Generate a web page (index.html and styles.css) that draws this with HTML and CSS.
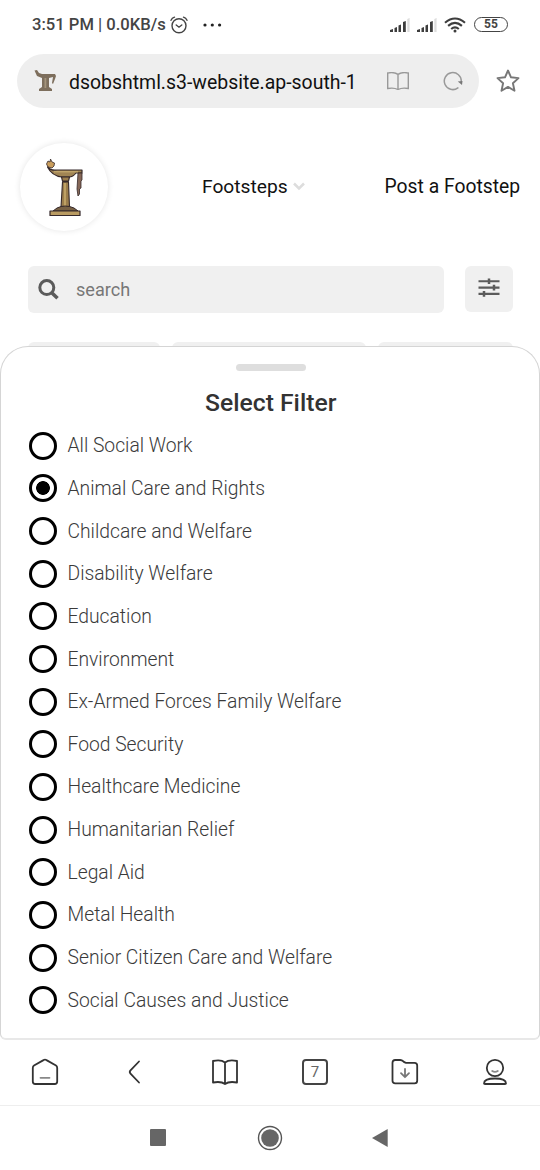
FILE: index.html
```html
<!DOCTYPE html>
<html lang="en">
<head>
<meta charset="utf-8">
<title>Select Filter</title>
<link rel="stylesheet" href="styles.css">
</head>
<body>
<div class="status">
  <span class="clock">3:51 PM | 0.0KB/s</span>
  <svg class="alarm" width="18" height="18" viewBox="0 0 18 18" fill="none" stroke="#444" stroke-width="1.4" stroke-linecap="round"><circle cx="9" cy="9.8" r="7"/><path d="M1 4.3Q2 2 4.5 1.2M17 4.3Q16 2 13.5 1.2M6.2 9l2.8 2.2L11.8 9"/></svg>
  <svg class="dots" width="19" height="4" viewBox="0 0 19 4" fill="#222"><circle cx="2" cy="2" r="1.6"/><circle cx="9.3" cy="2" r="1.6"/><circle cx="16.6" cy="2" r="1.6"/></svg>
  <div class="indicators">
    <svg width="20" height="16" viewBox="0 0 20 16" fill="#3d3d3d"><path d="M0 13l3-1v3H0zM4.5 11l2.5-1v5H4.5zM8.5 8.5l2.5-1V15H8.5zM13 5l2.8-1v11H13z"/><path d="M17.3 2l2.3-1v14h-2.3z" fill="#ddd"/></svg>
    <svg class="signal-two" width="20" height="16" viewBox="0 0 20 16" fill="#3d3d3d"><path d="M0 13l3-1v3H0zM4.5 11l2.5-1v5H4.5zM8.5 8.5l2.5-1V15H8.5zM13 5l2.8-1v11H13z"/><path d="M17.3 2l2.3-1v14h-2.3z" fill="#ddd"/></svg>
    <svg class="wifi" width="22" height="16" viewBox="0 0 22 16" fill="none" stroke="#3d3d3d" stroke-width="2.1"><path d="M1 5.7Q11-2.700 21 5.700M4.100 8.900Q11 3 17.900 8.900M7.200 12Q11 8.700 14.800 12"/><circle cx="11" cy="14" r="1.5" fill="#3d3d3d" stroke="none"/></svg>
    <span class="battery">55</span>
  </div>
</div>
<div class="address-row">
  <div class="address">
    <svg class="favicon" width="23" height="23" viewBox="0 0 23 23" fill="#7d6e5c"><path d="M.5.5L3 0l2 3 3 1h13l1 2-1 3-2 5-1-1 1-6-4 1v9l3 2v2H5v-2l3-2V8L3 6z"/><path d="M10.500 8h1.800v10h-1.800z" fill="#a4947c"/></svg>
    <span class="url">dsobshtml.s3-website.ap-south-1</span>
    <svg class="reader" width="22" height="18" viewBox="0 0 22 18" fill="none" stroke="#999" stroke-width="1.4"><path d="M.7 1Q7-.2 11 2.3 15-.2 21.3 1v15.500Q15 15.300 11 17.500 7 15.300.7 16.500zM11 2.300v15"/></svg>
    <svg class="reload" width="20" height="20" viewBox="0 0 20 20"><path d="M14.900 16.900A8.500 8.500 0 1 1 18.300 10.500" fill="none" stroke="#999" stroke-width="1.5" stroke-linecap="round"/><path d="M14.800 10.500l4.700-.5-.5 4z" fill="#777"/></svg>
  </div>
  <svg class="star" width="24" height="24" viewBox="0 0 24 24" fill="none" stroke="#777" stroke-width="1.9" stroke-linejoin="round"><path d="M12 1.500l3 6.800 7.500.8-5.600 5.100 1.600 7.500-6.500-3.800-6.500 3.800 1.600-7.500L1.500 9.100 9 8.300z"/></svg>
</div>
<div class="site-header">
  <div class="logo">
    <svg width="40" height="60" viewBox="0 0 40 60" stroke="#35282a" stroke-linejoin="round">
      <path d="M3 3l2 1 .5-3L7 4l2.500 1-.5 3-2 2-4-1-1.500-3z" fill="#c99d5c" stroke-width=".8"/>
      <path d="M2.500 9Q6 13 12 12h25v3H31Q28 19 24 19h-7Q7 18 2.500 9z" fill="#a08454" stroke-width="1.2"/>
      <path d="M9 13.800h24" stroke="#cdb274" stroke-width="1"/>
      <path d="M33 15h4v7l-1 1v7l-1.500 1v5l-1.500 2-1-7z" fill="#866858" stroke-width=".8"/>
      <path d="M16.500 19h8l-1 4h-6zM17.500 24h6l1 25H16z" fill="#9b7d4c" stroke-width="1.1"/>
      <path d="M20 25v24" stroke="#c7aa6b" stroke-width="1.6"/>
      <path d="M12 50q8-4 17 0l4 3H8z" fill="#776044" stroke-width="1"/>
      <path d="M5 53h30v4.500H5z" fill="#b99b62" stroke-width="1.2"/>
    </svg>
  </div>
  <span class="nav-main">Footsteps</span>
  <svg class="caret" width="12" height="9" viewBox="0 0 12 9" fill="none" stroke="#ddd" stroke-width="2.5"><path d="M1 1.500l5 5 5-5"/></svg>
  <span class="nav-post">Post a Footstep</span>
</div>
<div class="search-row">
  <div class="search">
    <svg width="21" height="21" viewBox="0 0 21 21" fill="none" stroke="#5b5b5b"><circle cx="8.8" cy="8.6" r="7" stroke-width="3"/><path d="M14 14l5.500 5.300" stroke-width="3.6"/></svg>
    <span>search</span>
  </div>
  <div class="filter">
    <svg width="22" height="19" viewBox="0 0 22 19" fill="none" stroke="#5b5b5b" stroke-width="2.1"><path d="M.5 3.300h21M.5 9.600h21M.5 15.900h21"/><path d="M11 .5v5.600M16 6.800v5.600M6 13.100v5.600" stroke-width="2.500"/></svg>
  </div>
</div>
<div class="chips"><div></div><div></div><div></div></div>
<div class="sheet">
  <div class="handle"></div>
  <h1>Select Filter</h1>
  <ul>
    <li><i></i><span>All Social Work</span></li>
    <li><i class="on"></i><span>Animal Care and Rights</span></li>
    <li><i></i><span>Childcare and Welfare</span></li>
    <li><i></i><span>Disability Welfare</span></li>
    <li><i></i><span>Education</span></li>
    <li><i></i><span>Environment</span></li>
    <li><i></i><span>Ex-Armed Forces Family Welfare</span></li>
    <li><i></i><span>Food Security</span></li>
    <li><i></i><span>Healthcare Medicine</span></li>
    <li><i></i><span>Humanitarian Relief</span></li>
    <li><i></i><span>Legal Aid</span></li>
    <li><i></i><span>Metal Health</span></li>
    <li><i></i><span>Senior Citizen Care and Welfare</span></li>
    <li><i></i><span>Social Causes and Justice</span></li>
  </ul>
</div>
<div class="toolbar">
  <div><svg width="28" height="28" viewBox="0 0 28 28"><path d="M12.500 2.100Q14 1.200 15.500 2.100L25 7.500Q26.200 8.200 26.200 10v13.500Q26.200 26 23.700 26H4.300Q1.800 26 1.800 23.500V10Q1.800 8.200 3 7.500z"/><path d="M9.500 19.800h9" stroke="#888"/></svg></div>
  <div><svg width="28" height="28" viewBox="0 0 28 28"><path d="M18 3.500l-8.500 8.900q-1.500 1.600 0 3.200l8.500 8.900"/></svg></div>
  <div><svg width="28" height="28" viewBox="0 0 28 28"><path d="M2 3Q10 1.200 14 4.500 18 1.200 26 3v21.500Q18 23 14 26 10 23 2 24.500zM14 4.500V26"/></svg></div>
  <div><span class="tabs">7</span></div>
  <div><svg width="28" height="28" viewBox="0 0 28 28"><path d="M4.200 2h5Q11 2 12 3.200T15 4.800h8.500Q26.200 4.800 26.200 7.500v15.200Q26.200 25.400 23.500 25.400H4.200Q1.500 25.400 1.500 22.700v-18Q1.500 2 4.200 2z"/><path d="M14 11v8M10 15.200l4 4 4-4" stroke="#777"/></svg></div>
  <div><svg width="28" height="28" viewBox="0 0 28 28"><circle cx="14" cy="10" r="8.200"/><path d="M3 25.500Q3 20.500 14 20.500t11 5q0 .5-1 .5H4q-1 0-1-.5z"/><path d="M11.200 13q2.800 1.800 5.600 0" stroke="#888"/></svg></div>
</div>
<div class="system">
  <svg class="square" width="16" height="17" viewBox="0 0 16 17"><rect width="16" height="17" rx="1" fill="#666"/></svg>
  <svg class="circle" width="26" height="26" viewBox="0 0 26 26"><circle cx="13" cy="13" r="11.5" fill="none" stroke="#555" stroke-width="1.4"/><circle cx="13" cy="13" r="8.8" fill="#666"/></svg>
  <svg class="triangle" width="16" height="20" viewBox="0 0 16 20"><path d="M15.700 1v18L0 10z" fill="#666"/></svg>
</div>
</body>
</html>
```
FILE: styles.css
```css
* { box-sizing: border-box; }
body { margin: 0; width: 540px; height: 1170px; overflow: hidden; display: flex; flex-direction: column; background: #fff; color: #111; font-family: Roboto, sans-serif; }
body > div { flex: none; }
svg { display: block; flex: none; }
span { white-space: nowrap; }

.status { height: 54px; display: flex; align-items: center; padding: 0 32px 5px; }
.clock { width: 138px; font-size: 16.6px; font-weight: 500; color: #444; }
.dots { margin-left: 15px; }
.indicators { margin-left: auto; display: flex; align-items: center; }
.signal-two { margin-left: 7px; }
.wifi { margin: 0 8px 0 7px; }
.battery { width: 34px; height: 15px; border: 1.5px solid #444; border-radius: 8px; font-size: 12px; line-height: 13px; font-weight: 700; color: #444; text-align: center; }

.address-row { height: 54px; padding-left: 17px; display: flex; align-items: center; }
.address { width: 462px; height: 54px; border-radius: 27px; background: #eee; display: flex; align-items: center; padding-left: 17px; }
.url { width: 317px; margin-left: 12px; padding-top: 2px; font-size: 19.45px; }
.reload { margin-left: 34px; }
.reader { margin-left: 1px; }
.star { margin-left: 17px; }

.site-header { height: 158px; display: flex; align-items: center; padding: 0 20px 1px; }
.logo { width: 88px; height: 88px; border-radius: 50%; box-shadow: 0 0 6px #e5e5e5; padding: 15px 0 0 25px; }
.nav-main { margin-left: 94px; font-size: 19.2px; }
.caret { margin-left: 5px; }
.nav-post { margin-left: auto; font-size: 19.3px; }

.search-row { height: 75.5px; padding-left: 28px; display: flex; align-items: flex-start; gap: 21px; }
.search { width: 416px; height: 47px; border-radius: 6px; background: #f0f0f0; display: flex; align-items: center; gap: 17px; padding: 0 0 1px 10px; font-size: 18.1px; color: #777; }
.filter { width: 48px; height: 46px; border-radius: 6px; background: #f0f0f0; display: grid; place-items: center; padding-bottom: 3px; }

.chips { height: 40px; padding: 0 27px 0 28px; display: grid; grid-template-columns: 132px 194px 135px; gap: 12px; }
.chips div { background: #f0f0f0; border-radius: 6px; }

.sheet { position: relative; height: 694.5px; margin-top: -36px; background: #fff; border: 1.5px solid #d5d5d5; border-bottom: 2px solid #e8e8e8; border-radius: 28px 28px 6px 6px; padding: 17px 26px 0 27.5px; }
.handle { width: 70px; height: 7px; border-radius: 4px; background: #dedede; margin: 0 auto; }
h1 { margin: 15px 0 5px; font-size: 24.7px; font-weight: 500; line-height: 34px; text-align: center; color: #333; }
ul { list-style: none; margin: 0; padding: 0; }
li { height: 42.65px; display: flex; align-items: center; gap: 11px; font-size: 19.3px; font-weight: 300; color: #3a3a3a; }
i { width: 28px; height: 28px; border: 3px solid #000; border-radius: 50%; }
.on { background: radial-gradient(circle, #000 6.5px, #fff 7.2px); }

.toolbar { height: 66px; border-bottom: 1px solid #eee; display: grid; grid-template-columns: repeat(6, 90px); align-items: center; justify-items: center; padding-bottom: 2px; }
.toolbar svg { fill: none; stroke: #333; stroke-width: 1.8; stroke-linecap: round; stroke-linejoin: round; }
.tabs { display: block; width: 26px; height: 26px; border: 2px solid #444; border-radius: 4px; font-size: 15px; line-height: 22px; text-align: center; color: #666; }

.system { height: 64px; display: flex; align-items: center; padding: 0 0 1px 150px; }
.circle { margin-left: 91px; }
.triangle { margin-left: 89px; }
```
